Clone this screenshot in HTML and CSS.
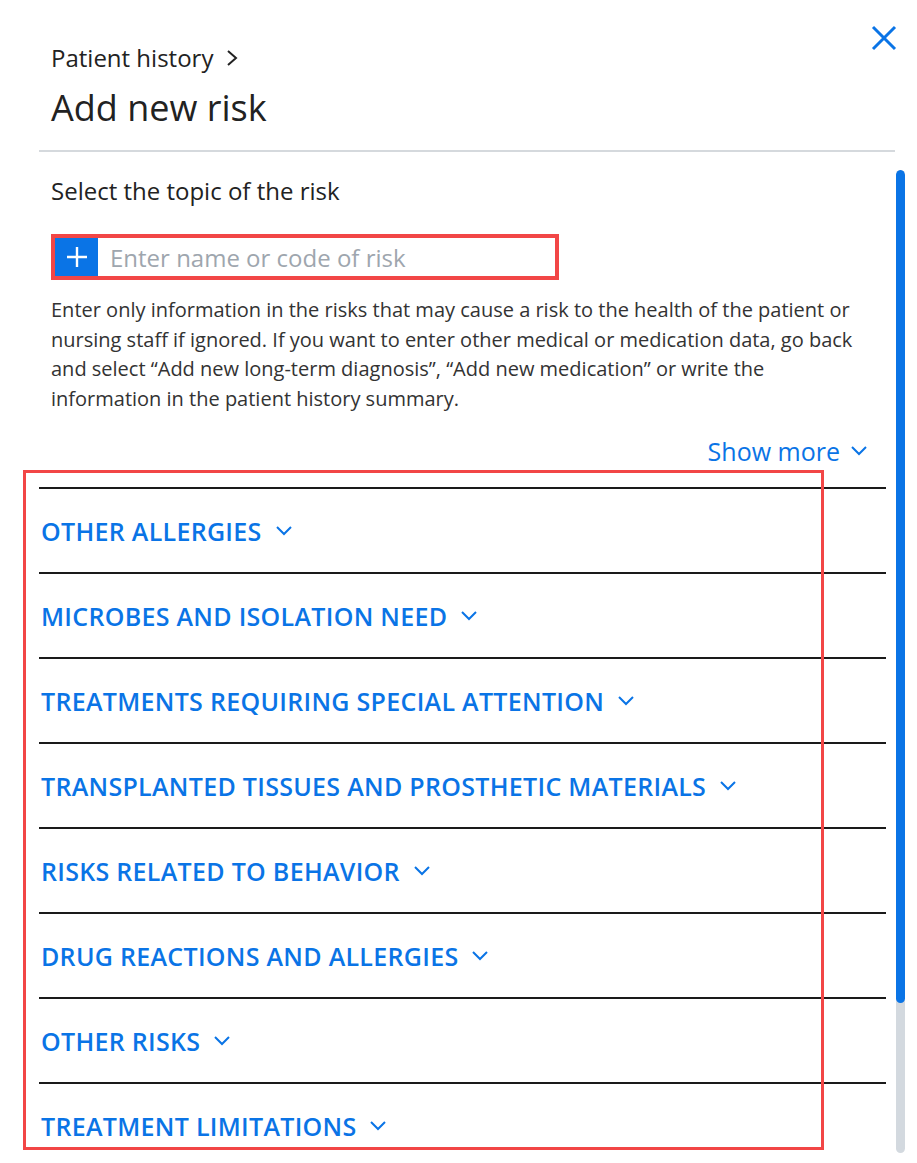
FILE: index.html
```html
<!DOCTYPE html>
<html lang="en">
<head>
  <meta charset="UTF-8">
  <title>Add new risk</title>
  <link rel="stylesheet" href="styles.css">
</head>
<body>

<div class="panel">
  <button class="close-btn" aria-label="Close">
    <svg width="26" height="26" viewBox="0 0 26 26"><path d="M2 2 L24 24 M24 2 L2 24" stroke="#0a74e6" stroke-width="3" fill="none"/></svg>
  </button>

  <div class="header">
    <div class="crumb">Patient history
      <svg width="14" height="20" viewBox="0 0 14 20"><path d="M3 3 L11 10 L3 17" stroke="#222" stroke-width="2" fill="none"/></svg>
    </div>
    <h1 class="title">Add new risk</h1>
  </div>

  <div class="divider"></div>

  <div class="body">
    <div class="content">
      <div class="intro">
        <div class="label">Select the topic of the risk</div>

        <div class="search">
          <span class="search-add">
            <svg width="22" height="22" viewBox="0 0 22 22"><path d="M11 1 V21 M1 11 H21" stroke="#fff" stroke-width="2.4" fill="none"/></svg>
          </span>
          <input type="text" placeholder="Enter name or code of risk">
        </div>

        <p class="hint">Enter only information in the risks that may cause a risk to the health of the patient or nursing staff if ignored. If you want to enter other medical or medication data, go back and select “Add new long-term diagnosis”, “Add new medication” or write the information in the patient history summary.</p>

        <div class="more-row">
          <a class="more" href="#">Show more
            <svg width="18" height="12" viewBox="0 0 18 12"><path d="M2 2 L9 9 L16 2" stroke="#0a74e6" stroke-width="2" fill="none"/></svg>
          </a>
        </div>
      </div>

      <div class="sections">
        <div class="section"><span>OTHER ALLERGIES</span><svg class="chev" viewBox="0 0 18 12"><path d="M2 2 L9 9 L16 2"/></svg></div>
        <div class="section"><span>MICROBES AND ISOLATION NEED</span><svg class="chev" viewBox="0 0 18 12"><path d="M2 2 L9 9 L16 2"/></svg></div>
        <div class="section"><span>TREATMENTS REQUIRING SPECIAL ATTENTION</span><svg class="chev" viewBox="0 0 18 12"><path d="M2 2 L9 9 L16 2"/></svg></div>
        <div class="section"><span>TRANSPLANTED TISSUES AND PROSTHETIC MATERIALS</span><svg class="chev" viewBox="0 0 18 12"><path d="M2 2 L9 9 L16 2"/></svg></div>
        <div class="section"><span>RISKS RELATED TO BEHAVIOR</span><svg class="chev" viewBox="0 0 18 12"><path d="M2 2 L9 9 L16 2"/></svg></div>
        <div class="section"><span>DRUG REACTIONS AND ALLERGIES</span><svg class="chev" viewBox="0 0 18 12"><path d="M2 2 L9 9 L16 2"/></svg></div>
        <div class="section"><span>OTHER RISKS</span><svg class="chev" viewBox="0 0 18 12"><path d="M2 2 L9 9 L16 2"/></svg></div>
        <div class="section"><span>TREATMENT LIMITATIONS</span><svg class="chev" viewBox="0 0 18 12"><path d="M2 2 L9 9 L16 2"/></svg></div>
      </div>

      <!-- highlight box round the list -->
      <div class="highlight"></div>
    </div>

    <div class="scrollbar"><div class="thumb"></div></div>
  </div>
</div>

</body>
</html>
```

FILE: styles.css
```css
body {
  margin: 0;
  background: #fff;
  font-family: "Open Sans", "Noto Sans", sans-serif;
  color: #222;
}

.panel {
  position: relative;
  height: 1163px;
  overflow: hidden;
}

.close-btn {
  position: absolute;
  top: 25px;
  right: 20px;
  background: none;
  border: none;
  padding: 0;
  cursor: pointer;
}

.header {
  padding: 42px 0 0 51px;
  height: 106px;
  box-sizing: border-box;
}

.crumb {
  font-size: 24px;
  line-height: 32px;
  display: flex;
  align-items: center;
  gap: 12px;
}

.title {
  margin: 12px 0 0;
  font-size: 36px;
  font-weight: 400;
  line-height: 44px;
}

.divider {
  margin: 44px 22px 0 39px;
  border-top: 2px solid #d5d9dd;
}

.body {
  display: flex;
  height: 1011px;
}

.content {
  position: relative;
  flex: 1;
  overflow: hidden;
}

.intro {
  padding: 23px 0 0 51px;
}

.label {
  font-size: 24px;
  line-height: 32px;
}

.search {
  display: flex;
  width: 500px;
  height: 38px;
  margin-top: 27px;
  border: 4px solid #f24646;
}

.search-add {
  width: 43px;
  background: #0a74e6;
  display: flex;
  align-items: center;
  justify-content: center;
}

.search input {
  flex: 1;
  border: none;
  outline: none;
  padding: 0 0 0 12px;
  font-family: inherit;
  font-size: 24px;
  color: #333;
}

.search input::placeholder {
  color: #9ea6ae;
}

.hint {
  margin: 15px 0 0;
  max-width: 812px;
  font-size: 20px;
  line-height: 29.5px;
  color: #333;
}

.more-row {
  display: flex;
  justify-content: flex-end;
  padding-right: 28px;
  margin-top: 21px;
}

.more {
  color: #0a74e6;
  font-size: 25px;
  text-decoration: none;
  display: flex;
  align-items: center;
  gap: 10px;
}

.sections {
  margin: 19px 10px 0 39px;
}

.section {
  height: 83px;
  border-top: 2px solid #1a1a1a;
  display: flex;
  align-items: center;
  gap: 13px;
  padding-left: 2px;
  color: #0a74e6;
  font-size: 25px;
  font-weight: 600;
  letter-spacing: 0.3px;
}

.chev {
  width: 18px;
  height: 12px;
  fill: none;
  stroke: #0a74e6;
  stroke-width: 2;
}

.highlight {
  position: absolute;
  left: 23px;
  top: 318px;
  width: 795px;
  height: 674px;
  border: 3px solid #f24646;
  pointer-events: none;
}

.scrollbar {
  width: 9px;
  margin: 18px 12px 10px 0;
  background: #d3d9df;
  border-radius: 5px;
  overflow: hidden;
}

.thumb {
  height: 833px;
  background: #0a74e6;
  border-radius: 5px;
}
```
